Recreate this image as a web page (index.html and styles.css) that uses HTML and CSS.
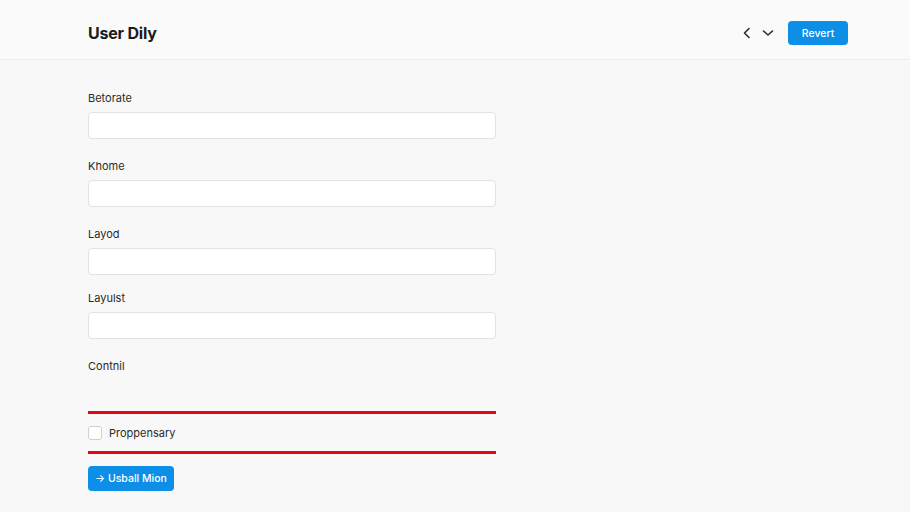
FILE: index.html
```html
<!DOCTYPE html>
<html lang="en">
<head>
<meta charset="UTF-8" />
<meta name="viewport" content="width=device-width, initial-scale=1.0">
<title>User Dily</title>
<link rel="stylesheet" href="styles.css">
</head>
<body>

<header class="topbar">
  <h1 class="title">User Dily</h1>
  <div class="actions">
    <button class="icon-btn" aria-label="Back">
      <svg width="10" height="12" viewBox="0 0 10 12"><path d="M7 1.5 L2.5 6 L7 10.5" fill="none" stroke="#2b2b2b" stroke-width="1.6" stroke-linecap="round" stroke-linejoin="round"/></svg>
    </button>
    <button class="icon-btn" aria-label="More">
      <svg width="12" height="10" viewBox="0 0 12 10"><path d="M1.5 3 L6 7 L10.5 3" fill="none" stroke="#2b2b2b" stroke-width="1.6" stroke-linecap="round" stroke-linejoin="round"/></svg>
    </button>
    <button class="btn btn-primary btn-revert">Revert</button>
  </div>
</header>

<main class="content">
  <form class="form">
    <div class="field">
      <label for="betorate">Betorate</label>
      <input type="text" id="betorate" />
    </div>
    <div class="field">
      <label for="khome">Khome</label>
      <input type="text" id="khome" />
    </div>
    <div class="field field-tight">
      <label for="layod">Layod</label>
      <input type="text" id="layod" />
    </div>
    <div class="field">
      <label for="layulst">Layulst</label>
      <input type="text" id="layulst" />
    </div>
    <div class="field field-control">
      <label>Contnil</label>
    </div>
    <div class="check-row">
      <input type="checkbox" id="proppensary" />
      <label for="proppensary">Proppensary</label>
    </div>
    <div class="form-actions">
      <button type="button" class="btn btn-primary btn-submit">&rarr; Usball Mion</button>
    </div>
  </form>
</main>

</body>
</html>
```

FILE: styles.css
```css
* {
  box-sizing: border-box;
}
body {
  margin: 0;
  background: #f8f8f8;
  font-family: Inter, 'Liberation Sans', sans-serif;
  color: #222;
}
.topbar {
  height: 60px;
  display: flex;
  align-items: center;
  justify-content: space-between;
  padding: 7px 62px 0 88px;
  background: #fafafa;
  border-bottom: 1px solid #efefef;
}
.title {
  margin: 0;
  font-size: 16px;
  font-weight: 700;
  color: #1b1b1b;
  letter-spacing: -0.2px;
}
.actions {
  display: flex;
  align-items: center;
}
.icon-btn {
  background: none;
  border: none;
  padding: 0;
  width: 12px;
  height: 14px;
  display: flex;
  align-items: center;
  justify-content: center;
  margin-right: 9px;
  cursor: pointer;
}
.icon-btn + .icon-btn {
  margin-right: 14px;
}
.btn {
  border: none;
  cursor: pointer;
  font-family: inherit;
  font-weight: 500;
}
.btn-primary {
  background: #0d8fe8;
  color: #fff;
  border-radius: 4px;
}
.btn-revert {
  width: 60px;
  height: 24px;
  font-size: 10.5px;
}
.content {
  padding: 31px 88px 0;
}
.form {
  width: 408px;
  display: flex;
  flex-direction: column;
}
.field {
  display: flex;
  flex-direction: column;
  margin-bottom: 20px;
}
.field-tight {
  margin-bottom: 16px;
}
.field label {
  font-size: 11px;
  line-height: 14px;
  color: #2a2a2a;
  margin-bottom: 7px;
}
.field input {
  height: 27px;
  border: 1px solid #e2e2e4;
  border-radius: 4px;
  background: #fff;
  font-family: inherit;
  font-size: 12px;
  padding: 0 10px;
}
.field-control {
  margin: 0;
  padding-bottom: 31px;
  border-bottom: 3px solid #e30613;
}
.check-row {
  display: flex;
  align-items: center;
  height: 40px;
  border-bottom: 3px solid #e30613;
}
.check-row input {
  appearance: none;
  width: 14px;
  height: 14px;
  margin: 0 7px 0 0;
  border: 1px solid #cfcfd2;
  border-radius: 3px;
  background: #fff;
}
.check-row label {
  font-size: 11px;
  color: #2a2a2a;
}
.form-actions {
  padding-top: 12px;
}
.btn-submit {
  width: 86px;
  height: 25px;
  font-size: 10.5px;
}
```
